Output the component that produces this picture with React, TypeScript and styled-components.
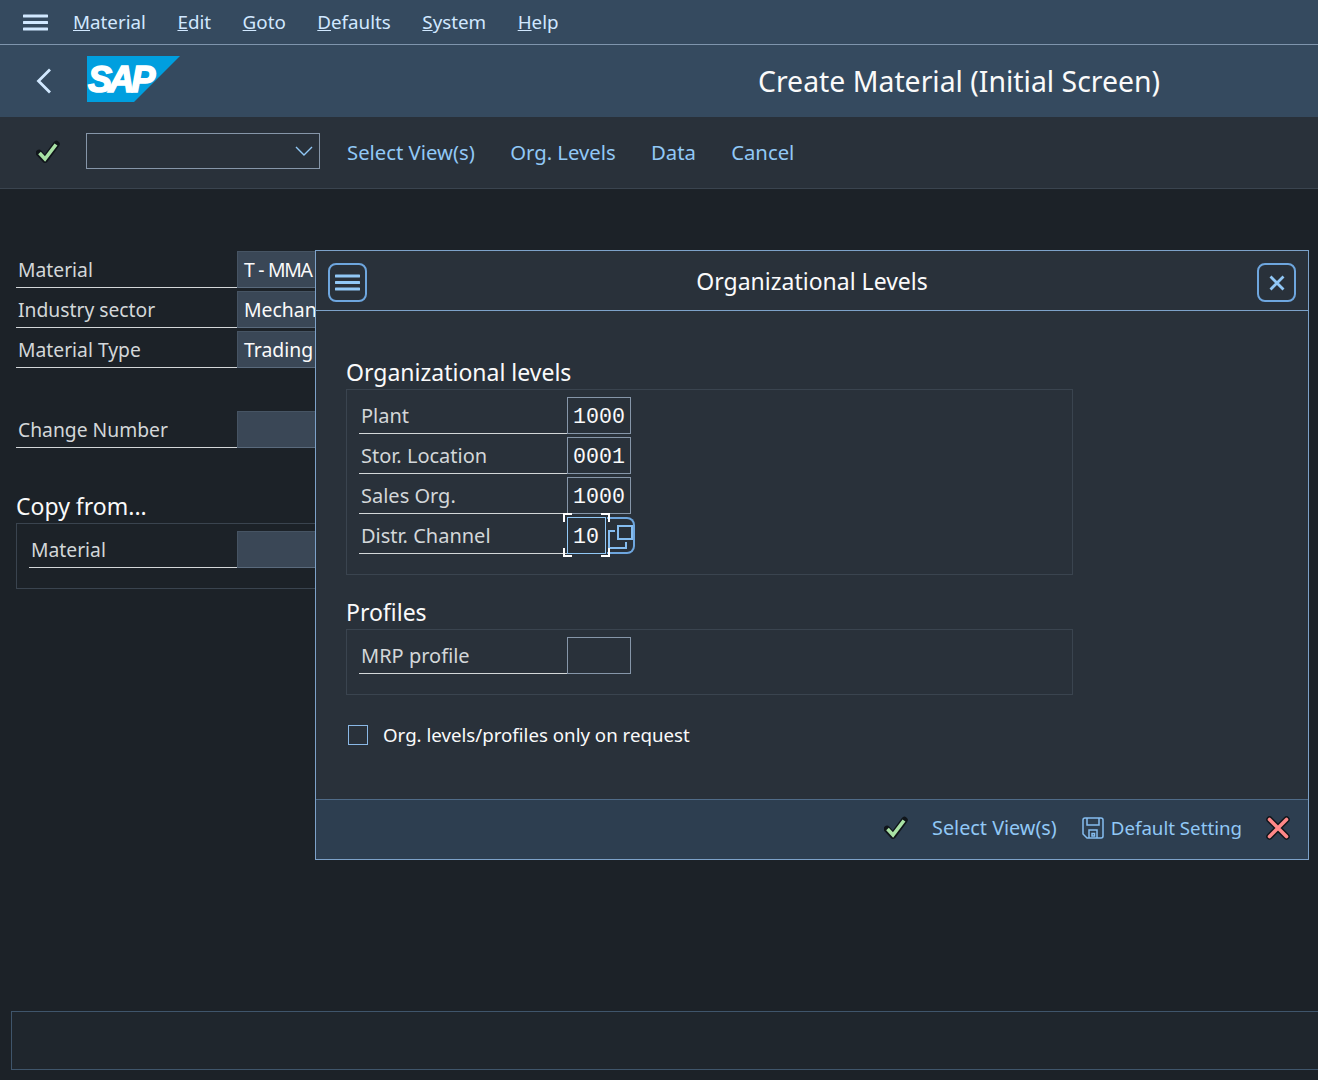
import React from 'react';
import styled, {createGlobalStyle} from 'styled-components';

const GlobalStyle = createGlobalStyle`
	html, body {
		margin: 0;
		padding: 0;
		background: #1c2228;
		overflow: hidden;
	}
	body {
		font-family: 'Noto Sans', 'Liberation Sans', sans-serif;
	}
`;

const MENU = [
	['M', 'aterial'],
	['E', 'dit'],
	['G', 'oto'],
	['D', 'efaults'],
	['S', 'ystem'],
	['H', 'elp'],
];

function Check() {
	return (
		<svg width='24' height='24' viewBox='0 0 24 24' fill='none'>
			<path d='M3 13 L9 19.5 L20.5 4' stroke='#10151a' strokeWidth='6.5' strokeLinecap='round' strokeLinejoin='round' />
			<path d='M3.5 13 L9 19 L20 4.5' stroke='#a9e2a5' strokeWidth='3.6' />
		</svg>
	);
}

function Hamburger({color, width}: {color: string; width: number}) {
	return (
		<svg width={width} height='17' viewBox={`0 0 ${width} 17`} fill='none'>
			<path d={`M1 2 H${width - 1} M1 8.5 H${width - 1} M1 15 H${width - 1}`} stroke={color} strokeWidth='3' strokeLinecap='round' />
		</svg>
	);
}

function Logo() {
	return (
		<LogoMark width='93' height='46' viewBox='0 0 93 46'>
			<polygon points='0,0 93,0 47,46 0,46' fill='#009fdf' />
			<text
				x='1'
				y='36'
				fontFamily='Liberation Sans, sans-serif'
				fontWeight='700'
				fontStyle='italic'
				fontSize='36'
				letterSpacing='-3.4'
				stroke='#fff'
				strokeWidth='1.6'
				fill='#fff'
			>
				SAP
			</text>
		</LogoMark>
	);
}

export default function App() {
	return (
		<Page>
			<GlobalStyle />
			<MenuBar>
				<MenuIcon>
					<Hamburger color='#d1e8ff' width={25} />
				</MenuIcon>
				{MENU.map(([first, rest]) => (
					<MenuItem key={first}>
						<u>{first}</u>
						{rest}
					</MenuItem>
				))}
			</MenuBar>
			<TitleBar>
				<BackIcon>
					<svg width='16' height='26' viewBox='0 0 16 26' fill='none'>
						<path d='M14 1.5 L2.5 13 L14 24.5' stroke='#d1e8ff' strokeWidth='2.8' />
					</svg>
				</BackIcon>
				<Logo />
				<Title>Create Material (Initial Screen)</Title>
			</TitleBar>
			<ToolBar>
				<ToolCheck>
					<Check />
				</ToolCheck>
				<CommandBox>
					<svg width='18' height='10' viewBox='0 0 18 10' fill='none'>
						<path d='M1 1 L9 9 L17 1' stroke='#91c8f6' strokeWidth='1.4' />
					</svg>
				</CommandBox>
				<ToolLinks>
					<ToolLink>Select View(s)</ToolLink>
					<ToolLink>Org. Levels</ToolLink>
					<ToolLink>Data</ToolLink>
					<ToolLink>Cancel</ToolLink>
				</ToolLinks>
			</ToolBar>
			<Main>
				<FormRow>
					<Label>Material</Label>
					<ReadField $tight>T - MMA - 01</ReadField>
				</FormRow>
				<FormRow>
					<Label>Industry sector</Label>
					<ReadField>Mechanical Engineering</ReadField>
				</FormRow>
				<FormRow>
					<Label>Material Type</Label>
					<ReadField>Trading Goods</ReadField>
				</FormRow>
				<SpacedRow>
					<Label>Change Number</Label>
					<ReadField />
				</SpacedRow>
				<SectionTitle>Copy from...</SectionTitle>
				<CopyBox>
					<CopyRow>
						<CopyLabel>Material</CopyLabel>
						<ReadField />
					</CopyRow>
				</CopyBox>
			</Main>
			<StatusBar />

			<Dialog>
				<DialogHeader>
					<IconButton>
						<Hamburger color='#91c8f6' width={25} />
					</IconButton>
					<DialogTitle>Organizational Levels</DialogTitle>
					<IconButton>
						<svg width='16' height='16' viewBox='0 0 16 16' fill='none'>
							<path d='M1.5 1.5 L14.5 14.5 M14.5 1.5 L1.5 14.5' stroke='#91c8f6' strokeWidth='2.8' />
						</svg>
					</IconButton>
				</DialogHeader>
				<DialogBody>
					<GroupTitle>Organizational levels</GroupTitle>
					<GroupBox>
						<LevelRow>
							<LevelLabel>Plant</LevelLabel>
							<MonoField>1000</MonoField>
						</LevelRow>
						<LevelRow>
							<LevelLabel>Stor. Location</LevelLabel>
							<MonoField>0001</MonoField>
						</LevelRow>
						<LevelRow>
							<LevelLabel>Sales Org.</LevelLabel>
							<MonoField>1000</MonoField>
						</LevelRow>
						<LevelRow>
							<LevelLabel>Distr. Channel</LevelLabel>
							<FocusWrap>
								<FocusField>10</FocusField>
								<Corner $top $left />
								<Corner $top />
								<Corner $left />
								<Corner />
							</FocusWrap>
							<ValueHelp>
								<svg width='26' height='36' viewBox='0 0 26 36' fill='none'>
									<path d='M8 13 H2 V30 H19 V24' stroke='#85bdf0' strokeWidth='2' />
									<path d='M11 8 H25 V21 H11 Z' stroke='#85bdf0' strokeWidth='2' />
								</svg>
							</ValueHelp>
						</LevelRow>
					</GroupBox>
					<ProfilesTitle>Profiles</ProfilesTitle>
					<GroupBox>
						<LevelRow>
							<LevelLabel>MRP profile</LevelLabel>
							<MonoField />
						</LevelRow>
					</GroupBox>
					<CheckRow>
						<CheckBox />
						<CheckLabel>Org. levels/profiles only on request</CheckLabel>
					</CheckRow>
				</DialogBody>
				<DialogFooter>
					<FooterCheck>
						<Check />
					</FooterCheck>
					<FooterLink>Select View(s)</FooterLink>
					<SaveLink>
						<svg width='22' height='22' viewBox='0 0 22 22' fill='none'>
							<path d='M1 3 Q1 1 3 1 H19 Q21 1 21 3 V19 Q21 21 19 21 H5 L1 17 Z' stroke='#85bdf0' strokeWidth='1.5' />
							<path d='M5 1 V8 H17 V1 M7 21 V13 H15 V21 M10 16.5 H12.5 V19 H10 Z' stroke='#85bdf0' strokeWidth='1.5' />
						</svg>
						<SaveText>Default Setting</SaveText>
					</SaveLink>
					<svg width='24' height='24' viewBox='0 0 24 24' fill='none'>
						<path d='M3.5 3.5 L20.5 20.5 M20.5 3.5 L3.5 20.5' stroke='#10151a' strokeWidth='6.5' strokeLinecap='round' />
						<path d='M3.5 3.5 L20.5 20.5 M20.5 3.5 L3.5 20.5' stroke='#ff8888' strokeWidth='3.6' strokeLinecap='round' />
					</svg>
				</DialogFooter>
			</Dialog>
		</Page>
	);
}

const Page = styled.div`
	position: relative;
	width: 1318px;
	height: 1080px;
	overflow: hidden;
	display: flex;
	flex-direction: column;
	background: #1c2228;
	color: #fafafa;
`;

const MenuBar = styled.div`
	height: 44px;
	box-sizing: content-box;
	display: flex;
	align-items: center;
	background: #354a5f;
	border-bottom: 1px solid #7f95ad;
	color: #d1e8ff;
`;

const MenuIcon = styled.div`
	display: flex;
	margin-left: 23px;
	margin-right: 25px;
`;

const MenuItem = styled.span`
	font-size: 18.8px;
	margin-right: 31.5px;
`;

const TitleBar = styled.div`
	height: 72px;
	display: flex;
	align-items: center;
	background: #354a5f;
`;

const BackIcon = styled.div`
	display: flex;
	margin-left: 36px;
	margin-right: 35px;
`;

const LogoMark = styled.svg`
	margin-bottom: 4px;
`;

const Title = styled.div`
	margin-left: auto;
	margin-right: 158px;
	font-size: 28.4px;
	color: #fafafa;
`;

const ToolBar = styled.div`
	height: 71px;
	display: flex;
	align-items: center;
	background: #29313a;
	border-bottom: 1px solid #3a444f;
`;

const ToolCheck = styled.div`
	display: flex;
	margin-left: 36px;
	margin-right: 26px;
	margin-bottom: 2px;
`;

const CommandBox = styled.div`
	width: 234px;
	height: 36px;
	margin-bottom: 4px;
	box-sizing: border-box;
	display: flex;
	align-items: center;
	justify-content: flex-end;
	padding-right: 6px;
	border: 1px solid #8696a9;
`;

const ToolLinks = styled.div`
	display: flex;
	gap: 35.3px;
	margin-left: 27px;
	margin-bottom: 2px;
`;

const ToolLink = styled.span`
	font-size: 20.3px;
	color: #91c8f6;
`;

const Main = styled.div`
	flex: 1;
	display: flex;
	flex-direction: column;
	padding: 62px 0 0 16px;
`;

const FormRow = styled.div`
	display: flex;
	height: 37px;
	margin-bottom: 3px;
`;

const SpacedRow = styled(FormRow)`
	margin-top: 40px;
`;

const Label = styled.div`
	width: 221px;
	flex-shrink: 0;
	box-sizing: border-box;
	padding-left: 2px;
	line-height: 37px;
	font-size: 19.3px;
	color: #d3d7d9;
	border-bottom: 1px solid #d3d7d9;
	white-space: nowrap;
`;

const ReadField = styled.div<{$tight?: boolean}>`
	width: 200px;
	flex-shrink: 0;
	box-sizing: border-box;
	padding-left: 6px;
	line-height: 35px;
	font-size: 19.4px;
	letter-spacing: ${(p) => (p.$tight ? '-1.3px' : '0')};
	word-spacing: ${(p) => (p.$tight ? '1px' : '-1px')};
	color: #fafafa;
	background: #3a4756;
	border: 1px solid #465463;
	border-bottom-color: #5a6a7c;
	white-space: nowrap;
	overflow: hidden;
`;

const SectionTitle = styled.div`
	margin-top: 39px;
	font-size: 23px;
	line-height: 33px;
	color: #fafafa;
`;

const CopyBox = styled.div`
	width: 400px;
	box-sizing: border-box;
	height: 66px;
	padding: 7px 0 0 12px;
	border: 1px solid #3a444f;
`;

const CopyRow = styled.div`
	display: flex;
	height: 37px;
`;

const CopyLabel = styled(Label)`
	width: 208px;
`;

const StatusBar = styled.div`
	height: 57px;
	margin: 0 -10px 10px 11px;
	background: #1f262d;
	border: 1px solid #3f556b;
`;

const Dialog = styled.div`
	position: absolute;
	left: 315px;
	top: 250px;
	width: 994px;
	height: 610px;
	box-sizing: border-box;
	display: flex;
	flex-direction: column;
	background: #29313a;
	border: 1px solid #7da2c9;
`;

const DialogHeader = styled.div`
	height: 60px;
	box-sizing: border-box;
	display: flex;
	align-items: center;
	justify-content: space-between;
	padding: 0 12px;
	border-bottom: 1px solid #7da2c9;
`;

const IconButton = styled.div`
	width: 39px;
	height: 39px;
	margin-top: 4px;
	box-sizing: border-box;
	display: flex;
	align-items: center;
	justify-content: center;
	border: 2px solid #6ea6de;
	border-radius: 8px;
`;

const DialogTitle = styled.div`
	font-size: 23px;
	color: #fafafa;
`;

const DialogBody = styled.div`
	flex: 1;
	padding: 46px 0 0 30px;
`;

const GroupTitle = styled.div`
	font-size: 23px;
	line-height: 32px;
	margin-top: -1px;
	padding-bottom: 1px;
	color: #fafafa;
`;

const ProfilesTitle = styled(GroupTitle)`
	margin-top: 21px;
`;

const GroupBox = styled.div`
	width: 727px;
	box-sizing: border-box;
	padding: 7px 0 20px 12px;
	border: 1px solid #3a444f;
`;

const LevelRow = styled.div`
	display: flex;
	height: 37px;
	margin-bottom: 3px;
	&:last-child {
		margin-bottom: 0;
	}
`;

const LevelLabel = styled(Label)`
	width: 208px;
	font-size: 20px;
`;

const MonoField = styled.div`
	width: 64px;
	height: 37px;
	box-sizing: border-box;
	padding-left: 5px;
	line-height: 39px;
	font-family: 'Liberation Mono', monospace;
	font-size: 21.6px;
	color: #fafafa;
	border: 1px solid #8696a9;
`;

const FocusWrap = styled.div`
	position: relative;
	width: 39px;
	height: 37px;
`;

const FocusField = styled(MonoField)`
	width: 39px;
	border-color: #91c8f6;
`;

const Corner = styled.span<{$top?: boolean; $left?: boolean}>`
	position: absolute;
	width: 9px;
	height: 9px;
	box-sizing: border-box;
	${(p) => (p.$top ? 'top: -4px; border-top: 2px solid #fff;' : 'bottom: -3px; border-bottom: 2px solid #fff;')}
	${(p) => (p.$left ? 'left: -4px; border-left: 2px solid #fff;' : 'right: -4px; border-right: 2px solid #fff;')}
`;

const ValueHelp = styled.div`
	width: 28px;
	height: 37px;
	margin-left: 1px;
	box-sizing: border-box;
	display: flex;
	align-items: center;
	justify-content: flex-start;
	border: 2px solid #6ea6de;
	border-left: none;
	border-radius: 0 8px 8px 0;
`;

const CheckRow = styled.div`
	display: flex;
	align-items: center;
	margin: 27px 0 0 2px;
`;

const CheckBox = styled.div`
	width: 20px;
	height: 20px;
	box-sizing: border-box;
	border: 1px solid #8ab8e6;
	margin-right: 15px;
`;

const CheckLabel = styled.span`
	font-size: 18.7px;
	color: #fafafa;
`;

const DialogFooter = styled.div`
	height: 60px;
	box-sizing: border-box;
	display: flex;
	align-items: center;
	justify-content: flex-end;
	padding: 0 18px 4px 0;
	background: #2d3e50;
	border-top: 1px solid #4f6b88;
`;

const FooterCheck = styled.div`
	display: flex;
	margin-right: 24px;
`;

const FooterLink = styled.span`
	font-size: 19.8px;
	color: #91c8f6;
	margin-right: 25px;
`;

const SaveLink = styled(FooterLink)`
	display: flex;
	align-items: center;
	gap: 7px;
	margin-right: 24px;
`;

const SaveText = styled.span`
	font-size: 18.7px;
`;
